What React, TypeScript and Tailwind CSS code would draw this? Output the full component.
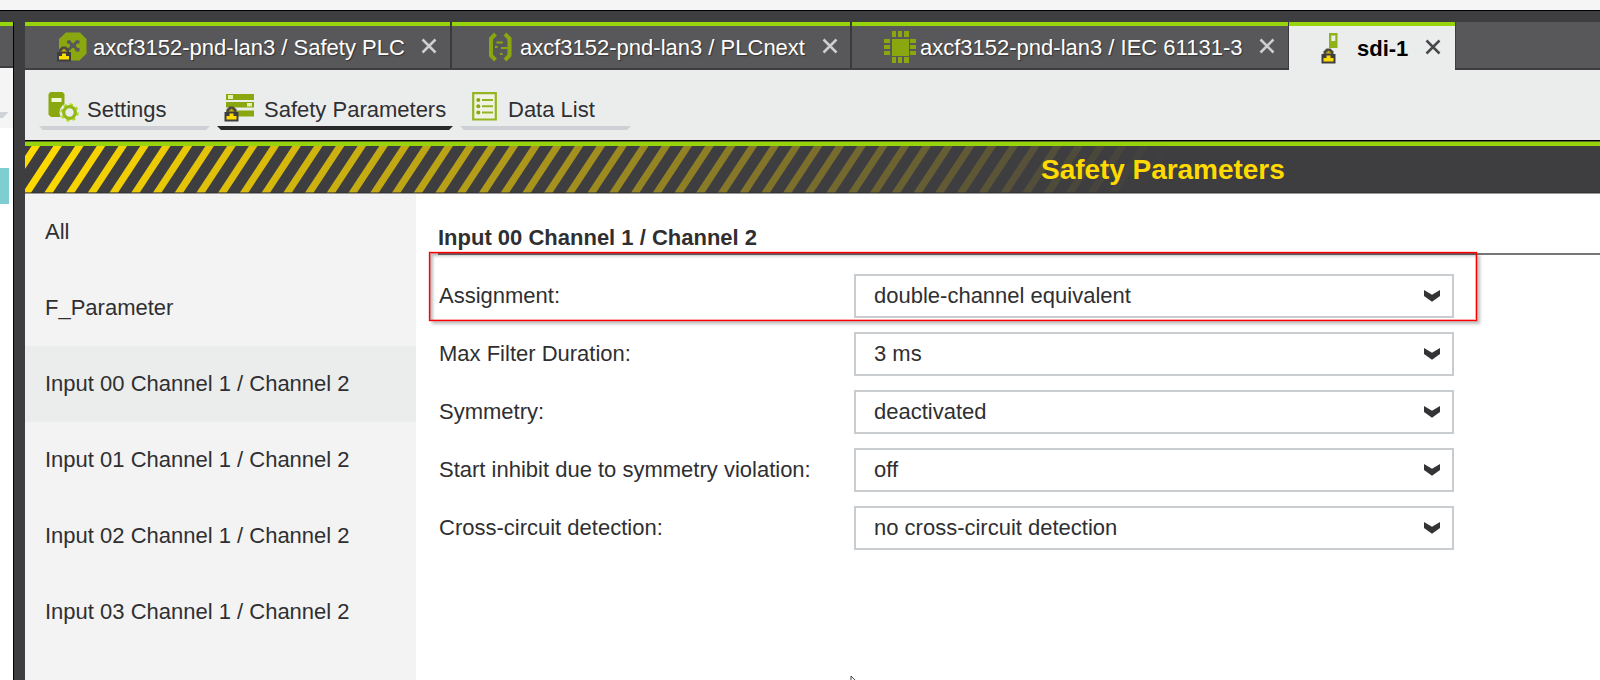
import type { ReactNode } from "react";

type Tab = {
  title: string;
  icon: ReactNode;
  box: string;
  iconBox: string;
  closeBox: string;
};

function Lock({ x, y }: { x: number; y: number }) {
  return (
    <g transform={`translate(${x} ${y})`}>
      <path d="M2 7V3.500L5 .500h4l3 3V7z" fill="#4a4a40" />
      <path d="M4 5.500L7 2.500l3 3z" fill="#c5a80c" />
      <path d="M0 6h14v9.500H0z" fill="#3e3e40" />
      <path d="M5 7.500h4v2.500h3v3.500H2V10h3z" fill="#ffdc00" />
    </g>
  );
}

function SafetyPlcIcon() {
  return (
    <svg width="32" height="32" viewBox="0 0 32 32">
      <path d="M10 1.500h14l6.500 6.500v14.500l-7 7H10l-7-7V8z" fill="#8aa70f" />
      <path
        d="M12 10l10 9M22 10l-10 9"
        stroke="#58585a"
        strokeWidth="3"
      />
      <path d="M11 9.500h4v3h-4zM19.500 9.500h4v3h-4zM19.500 17h4v3.500h-4zM14 12.500h6v4h-6z" fill="#58585a" />
      <Lock x={1} y={15} />
    </svg>
  );
}

function PlcNextIcon() {
  return (
    <svg width="28" height="30" viewBox="0 0 28 30">
      <g fill="none" stroke="#8aa70f">
        <path d="M8.500 2L4 6.500v17L8.500 28" strokeWidth="4" />
        <path d="M18 2l4.500 4.500v17L18 28" strokeWidth="4" />
        <path d="M9.500 10.500h6.500M14 16h6.500M8 15h2.500M13 22h2.500" strokeWidth="2" />
      </g>
    </svg>
  );
}

function ChipIcon() {
  return (
    <svg width="32" height="32" viewBox="0 0 32 32" fill="#8aa70f">
      <path d="M8 8h17v17H8z" />
      <path d="M8 0h4v6H8zM14 0h4v6h-4zM20 0h5v6h-5zM8 26h4v6H8zM14 26h4v6h-4zM20 26h5v6h-5z" />
      <path d="M0 8h6v4H0zM0 14h6v4H0zM0 20h6v4H0zM26 8h6v4h-6zM26 14h6v4h-6zM26 20h6v4h-6z" />
    </svg>
  );
}

function DeviceIcon() {
  return (
    <svg width="18" height="32" viewBox="0 0 18 32">
      <path d="M9 1h8.500v15H9z" fill="#8fb21a" />
      <path d="M11.300 3.500h4v5.500h-4z" fill="#ebedec" />
      <Lock x={1.5} y={16} />
    </svg>
  );
}

function SettingsIcon() {
  return (
    <svg width="31" height="31" viewBox="0 0 31 31">
      <path d="M2.500 0h12l2 2v23H3l-2.500-2.500V2z" fill="#8aa70f" />
      <path d="M3.500 6h10v4h-10z" fill="#f0f8d8" />
      <circle cx="21.500" cy="20.500" r="10" fill="#ebedec" />
      <circle cx="21.500" cy="20.500" r="8" fill="none" stroke="#b2de2a" strokeWidth="2.600" strokeDasharray="3.140 3.140" />
      <circle cx="21.500" cy="20.500" r="5.800" fill="none" stroke="#93b818" strokeWidth="3.200" />
    </svg>
  );
}

function ParametersIcon() {
  return (
    <svg width="32" height="30" viewBox="0 0 32 30">
      <path d="M2 2h28v6H2zM2 10h28v5.500H2zM2 18.500h28v6H2z" fill="#8aa70f" />
      <path d="M4 3h5v4H4zM23 11h5v3.500h-5z" fill="#e0f3a8" />
      <Lock x={0.5} y={14} />
    </svg>
  );
}

function ListIcon() {
  return (
    <svg width="25" height="29" viewBox="0 0 25 29">
      <path d="M1.200 1.200h22.600v26.300H1.200z" fill="#f0f3e4" stroke="#93b520" strokeWidth="2.200" />
      <path d="M10 8h11M10 14.300h11M10 20.600h11" stroke="#93b520" strokeWidth="2" />
      <g fill="#8aa70f">
        <circle cx="6.300" cy="8" r="2" />
        <circle cx="6.300" cy="14.300" r="2" />
        <circle cx="6.300" cy="20.600" r="2" />
      </g>
    </svg>
  );
}

function CloseIcon({ dark }: { dark?: boolean }) {
  return (
    <svg width="16" height="16" viewBox="0 0 16 16">
      <path
        d="M1.500 1.500l13 13M14.500 1.500l-13 13"
        stroke={dark ? "#48484a" : "#cfcfcf"}
        strokeWidth="2.500"
      />
    </svg>
  );
}

const TABS: Tab[] = [
  {
    title: "axcf3152-pnd-lan3 / Safety PLC",
    icon: <SafetyPlcIcon />,
    box: "w-[427px] border-r-2",
    iconBox: "ml-[31px] w-[37px]",
    closeBox: "right-[13px]",
  },
  {
    title: "axcf3152-pnd-lan3 / PLCnext",
    icon: <PlcNextIcon />,
    box: "w-[400px] border-r-2",
    iconBox: "ml-[35px] w-[33px]",
    closeBox: "right-[12px]",
  },
  {
    title: "axcf3152-pnd-lan3 / IEC 61131-3",
    icon: <ChipIcon />,
    box: "w-[437px] border-r",
    iconBox: "ml-[32px] w-[36px]",
    closeBox: "right-[13px]",
  },
];

const GROUPS = [
  "All",
  "F_Parameter",
  "Input 00 Channel 1 / Channel 2",
  "Input 01 Channel 1 / Channel 2",
  "Input 02 Channel 1 / Channel 2",
  "Input 03 Channel 1 / Channel 2",
];

const PARAMS = [
  { label: "Assignment:", value: "double-channel equivalent" },
  { label: "Max Filter Duration:", value: "3 ms" },
  { label: "Symmetry:", value: "deactivated" },
  { label: "Start inhibit due to symmetry violation:", value: "off" },
  { label: "Cross-circuit detection:", value: "no cross-circuit detection" },
];

const STRIPES = Array.from({ length: 54 }, (_, i) => i * 21.73 - 24.4);

function Underline({ width, color }: { width: number; color: string }) {
  return (
    <svg width={width} height="4" className="block">
      <path d={`M0 0H${width}L${width - 4} 4H4z`} fill={color} />
    </svg>
  );
}

function HazardBanner() {
  return (
    <div className="relative h-[47px] shrink-0 overflow-hidden bg-[#3e3e40]">
      <svg width="1575" height="47" className="block">
        {STRIPES.map((x) => (
          <path
            key={x}
            d={`M${x} 47L${x + 31} 0h8.500L${x + 8.5} 47z`}
            fill="#ffda00"
            fillOpacity={Math.max(0, Math.min(1, 1 - (x + 5) / 1120))}
          />
        ))}
      </svg>
      <h1 className="absolute left-[1016px] top-[8px] text-[28px] leading-[32px] font-bold tracking-[-0.04px] whitespace-nowrap text-[#ffda00]">
        Safety Parameters
      </h1>
      <div className="absolute inset-x-0 bottom-0 h-px bg-[#2e2e30]/60" />
    </div>
  );
}

export default function App() {
  return (
    <div className="flex h-[680px] w-[1600px] flex-col overflow-hidden bg-[#3e3e40] font-['Liberation_Sans',Arial,sans-serif] text-[22px] text-[#2f2f32]">
      <div className="h-[11px] shrink-0 border-b border-black bg-[#f5f5f5]" />
      <div className="h-[11px] shrink-0" />

      <div className="flex min-h-0 flex-1">
        {/* edge of the neighbouring pane */}
        <div className="flex w-[14px] shrink-0 flex-col border-r border-black bg-white">
          <div className="h-1 bg-[#97d40b]" />
          <div className="h-[42px] border-b-2 border-[#3e3e40] bg-[#58585a]" />
          <div className="h-[60px] bg-[#f5f5f5] pt-11">
            <svg width="9" height="6" className="block">
              <path d="M0 0h8.500L3 6H0z" fill="#d0d3d8" />
            </svg>
          </div>
          <div className="mt-10 h-[36px] w-[9px] bg-[#7dcdd1]" />
        </div>
        <div className="w-[11px] shrink-0" />

        <div className="flex min-w-0 flex-1 flex-col bg-white">
          <div className="flex h-12 shrink-0 bg-[#58585a]">
            {TABS.map((tab) => (
              <div
                key={tab.title}
                className={`relative flex shrink-0 flex-col border-[#3a3a3c] ${tab.box}`}
              >
                <div className="h-1 bg-[#97d40b]" />
                <div className="flex flex-1 items-center border-b-2 border-[#3e3e40]">
                  <span className={`shrink-0 ${tab.iconBox}`}>{tab.icon}</span>
                  <span className="whitespace-nowrap text-white [text-shadow:1px_1px_1px_#333]">
                    {tab.title}
                  </span>
                  <span className={`absolute top-[16px] ${tab.closeBox}`}>
                    <CloseIcon />
                  </span>
                </div>
              </div>
            ))}
            <div className="relative flex w-[166px] shrink-0 flex-col bg-[#ebedec]">
              <div className="h-1 bg-[#97d40b]" />
              <div className="flex flex-1 items-center">
                <span className="ml-[31px] w-[37px]">
                  <DeviceIcon />
                </span>
                <span className="font-bold text-black">sdi-1</span>
                <span className="absolute right-[14px] top-[17px]">
                  <CloseIcon dark />
                </span>
              </div>
            </div>
            <div className="flex-1 border-b-2 border-l border-[#3e3e40]" />
          </div>

          <div className="flex h-[70px] shrink-0 items-end gap-[7px] bg-[#ebedec] pb-[10px] pl-[14px]">
            <div>
              <div className="flex h-9 pl-[9px]">
                <span className="w-[39px] pt-0.5">
                  <SettingsIcon />
                </span>
                <span className="mt-[3px]">Settings</span>
              </div>
              <Underline width={171} color="#cdd0d5" />
            </div>
            <div>
              <div className="flex h-9 pl-[7px]">
                <span className="w-[40px] pt-0.5">
                  <ParametersIcon />
                </span>
                <span className="mt-[3px] whitespace-nowrap">Safety Parameters</span>
              </div>
              <Underline width={236} color="#29292c" />
            </div>
            <div>
              <div className="flex h-9 pl-3">
                <span className="w-[36px] pt-0.5">
                  <ListIcon />
                </span>
                <span className="mt-[3px]">Data List</span>
              </div>
              <Underline width={171} color="#cdd0d5" />
            </div>
          </div>
          <div className="h-px shrink-0 bg-black" />
          <div className="h-px shrink-0 bg-[#566b2a]" />
          <div className="h-1 shrink-0 bg-[#97d40b]" />

          <HazardBanner />

          <div className="flex min-h-0 flex-1 border-t border-[#9a9a9c]">
            <nav className="w-[391px] shrink-0 bg-[#f3f3f3]">
              {GROUPS.map((name, i) => (
                <div
                  key={name}
                  className={`flex h-[75.9px] items-center pl-[20px] ${i === 2 ? "bg-[#ebedec]" : ""}`}
                >
                  {name}
                </div>
              ))}
            </nav>

            <main className="relative min-w-0 flex-1 pl-[22px]">
              <h2 className="flex h-[61px] items-end border-b-2 border-[#77777a] font-bold leading-[31px]">
                Input 00 Channel 1 / Channel 2
              </h2>
              <div className="mt-[19px] flex flex-col gap-[14.5px]">
                {PARAMS.map((p) => (
                  <div key={p.label} className="flex h-[43.5px] items-center pl-px">
                    <span className="w-[415px] shrink-0 whitespace-nowrap">{p.label}</span>
                    <div className="flex h-full w-[600px] items-center justify-between border-2 border-[#c9cdd0] bg-white pl-[18px] pr-[12px]">
                      <span>{p.value}</span>
                      <svg width="16" height="12" viewBox="0 0 16 12">
                        <path d="M0 0l8 4.800L16 0v6l-8 5.800L0 6z" fill="#343436" />
                      </svg>
                    </div>
                  </div>
                ))}
              </div>
              {/* highlight around the assignment row */}
              <div className="absolute left-[13px] top-[58px] h-[69px] w-[1048px] border border-[#ff0000] shadow-[0_0_0_0.5px_#ff000055,inset_0_0_0_1px_#ff000055,3px_3px_3px_#00000040,inset_3px_3px_3px_#00000040]" />
              <svg width="6" height="5" className="absolute bottom-0 left-[434px]">
                <path d="M1 5V1l4 4" fill="#fff" stroke="#444" />
              </svg>
            </main>
          </div>
        </div>
      </div>
    </div>
  );
}
